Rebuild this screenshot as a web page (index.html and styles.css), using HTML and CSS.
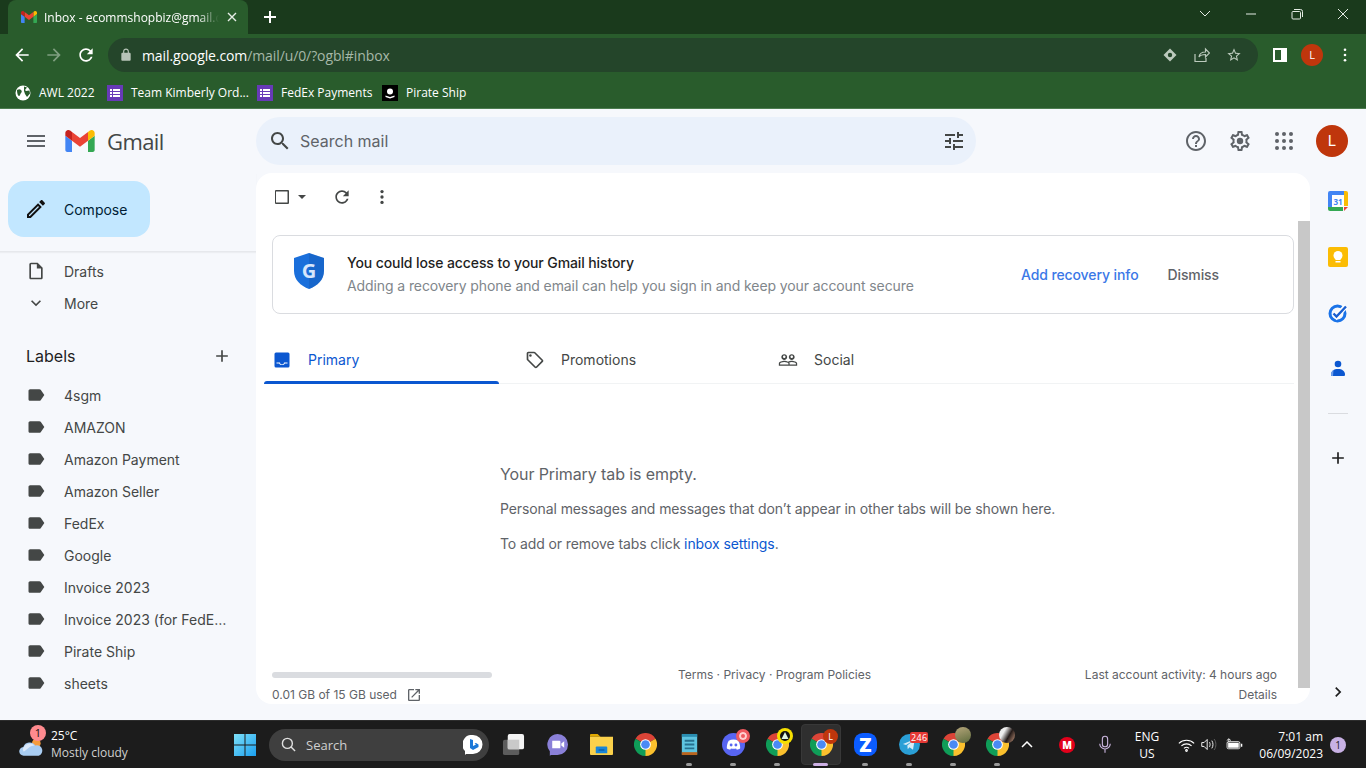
FILE: index.html
```html
<!DOCTYPE html>
<html lang="en">
<head>
<meta charset="utf-8">
<title>Inbox</title>
<link rel="stylesheet" href="styles.css">
</head>
<body>
<svg class="defs" aria-hidden="true">
  <defs>
    <symbol id="gm" viewBox="52 42 88 66">
      <path fill="#4285f4" d="M58 108h14V74L52 59v43c0 3.32 2.69 6 6 6"/>
      <path fill="#34a853" d="M120 108h14c3.32 0 6-2.69 6-6V59l-20 15"/>
      <path fill="#fbbc04" d="M120 48v26l20-15v-8c0-7.42-8.47-11.65-14.4-7.2"/>
      <path fill="#ea4335" d="M72 74V48l24 18 24-18v26L96 92"/>
      <path fill="#c5221f" d="M52 51v8l20 15V48l-5.6-4.2c-5.94-4.45-14.4-.22-14.4 7.2"/>
    </symbol>
    <symbol id="chrome" viewBox="0 0 24 24">
      <path fill="#db4437" d="M12 12 1.6 6A12 12 0 0 1 22.4 6z"/>
      <path fill="#0f9d58" d="M12 12 1.6 6A12 12 0 0 0 12 24l5-6z"/>
      <path fill="#fbc02d" d="M12 12 22.4 6A12 12 0 0 1 12 24z"/>
      <circle cx="12" cy="12" r="5.6" fill="#fff"/>
      <circle cx="12" cy="12" r="4.5" fill="#4a8af4"/>
    </symbol>
    <symbol id="tag" viewBox="0 0 24 24"><path d="M17.63 5.84C17.27 5.33 16.67 5 16 5L5 5.01C3.9 5.01 3 5.9 3 7v10c0 1.1.9 1.99 2 1.99L16 19c.67 0 1.27-.33 1.63-.84L22 12l-4.37-6.16z"/></symbol>
    <symbol id="refresh" viewBox="0 0 24 24"><path d="M17.65 6.35C16.2 4.9 14.21 4 12 4c-4.42 0-7.99 3.58-7.99 8s3.57 8 7.99 8c3.73 0 6.84-2.55 7.73-6h-2.08c-.82 2.33-3.04 4-5.65 4-3.31 0-6-2.69-6-6s2.69-6 6-6c1.66 0 3.14.69 4.22 1.78L13 11h7V4l-2.35 2.35z"/></symbol>
    <symbol id="form" viewBox="0 0 16 16">
      <rect width="16" height="16" fill="#673ab7"/>
      <path fill="#fff" d="M3 4h2v2H3zM6 4h7v2H6zM3 7h2v2H3zM6 7h7v2H6zM3 10h2v2H3zM6 10h7v2H6z"/>
    </symbol>
  </defs>
</svg>

<div class="tabstrip">
  <div class="tab">
    <svg class="tab-fav"><use href="#gm"/></svg>
    <span class="tab-title">Inbox - ecommshopbiz@gmail.com</span>
    <svg class="tab-close" viewBox="0 0 10 10"><path d="M1 1l8 8M9 1l-8 8"/></svg>
  </div>
  <svg class="newtab" viewBox="0 0 12 12"><path d="M6 0v12M0 6h12"/></svg>
  <div class="winctl">
    <svg class="winbtn" viewBox="0 0 46 12"><path d="M18 3l5 5 5-5"/></svg>
    <svg class="winbtn" viewBox="0 0 46 12"><path d="M18 6h10"/></svg>
    <svg class="winbtn" viewBox="0 0 46 12"><path d="M19 3.5h6.5a1 1 0 0 1 1 1V10a1 1 0 0 1-1 1H19a1 1 0 0 1-1-1V4.500a1 1 0 0 1 1-1zM20 1.500h6.500a2 2 0 0 1 2 2V9"/></svg>
    <svg class="winbtn" viewBox="0 0 46 12"><path d="M18 1l10 10M28 1L18 11"/></svg>
  </div>
</div>

<div class="toolbar">
  <svg class="nav" viewBox="0 0 24 24"><path d="M20 11H7.830l5.590-5.590L12 4l-8 8 8 8 1.410-1.410L7.830 13H20v-2z"/></svg>
  <svg class="nav nav-off" viewBox="0 0 24 24"><path d="M12 4l-1.410 1.410L16.170 11H4v2h12.170l-5.580 5.590L12 20l8-8z"/></svg>
  <svg class="nav"><use href="#refresh"/></svg>
  <div class="omnibox">
    <svg class="lock" viewBox="0 0 24 24"><path d="M18 8h-1V6c0-2.760-2.240-5-5-5S7 3.240 7 6v2H6c-1.100 0-2 .9-2 2v10c0 1.100.9 2 2 2h12c1.100 0 2-.9 2-2V10c0-1.100-.9-2-2-2zM9 6c0-1.660 1.340-3 3-3s3 1.340 3 3v2H9V6z"/></svg>
    <span class="url"><span class="url-host">mail.google.com</span>/mail/u/0/?ogbl#inbox</span>
    <svg class="omni-icon" viewBox="0 0 16 16"><path class="omni-fill" d="M8 1.500 14.500 8 8 14.500 1.500 8z"/><circle class="omni-eye" cx="8" cy="8" r="2.200"/></svg>
    <svg class="omni-icon" viewBox="0 0 16 16"><path class="omni-line" d="M1 7v7.500h11V11M5 10c.5-3.500 3-5 6.500-5V2L15.500 6l-4 4V7.500C9 7.500 6.500 8 5 10z"/></svg>
    <svg class="omni-icon" viewBox="0 0 24 24"><path class="omni-fill" d="M22 9.240l-7.190-.62L12 2 9.190 8.630 2 9.240l5.460 4.730L5.820 21 12 17.270 18.180 21l-1.630-7.030L22 9.240zM12 15.400l-3.760 2.270 1-4.280-3.320-2.880 4.380-.38L12 6.100l1.710 4.040 4.380.38-3.320 2.880 1 4.280L12 15.400z"/></svg>
  </div>
  <svg class="sidepanel" viewBox="0 0 14 14"><rect class="sp-a" width="14" height="14"/><rect class="sp-b" x="2" y="2" width="6" height="10"/></svg>
  <div class="tb-avatar">L</div>
  <svg class="tb-menu" viewBox="0 0 4 16"><circle cx="2" cy="2" r="1.500"/><circle cx="2" cy="8" r="1.500"/><circle cx="2" cy="14" r="1.500"/></svg>
</div>

<div class="bookmarks">
  <div class="bm bm-awl">
    <svg class="bm-icon" viewBox="0 0 16 16"><circle cx="8" cy="8" r="7.500" fill="#fff"/><path fill="#295c2c" d="M2 5c2-1 3-1 4 0s1 2 0 3-1 3-2 3-2-3-2-6zM9 1.500l3 1-2 2.500 1 1 3.500-.5.5 3-3 3.500-2-3-1-3z"/></svg>
    <span>AWL 2022</span>
  </div>
  <div class="bm bm-team"><svg class="bm-icon"><use href="#form"/></svg><span>Team Kimberly Ord...</span></div>
  <div class="bm bm-fedex"><svg class="bm-icon"><use href="#form"/></svg><span>FedEx Payments</span></div>
  <div class="bm">
    <svg class="bm-icon" viewBox="0 0 16 16"><rect width="16" height="16" fill="#000"/><circle cx="8" cy="6.500" r="3" fill="#fff"/><path fill="#fff" d="M3.500 10.500l4.500 1.500 4.500-1.500v1.500L8 13.500 3.500 12z"/></svg>
    <span>Pirate Ship</span>
  </div>
</div>

<div class="gmail">
  <header class="gm-header">
    <div class="brand">
      <svg class="icon24 g-icon" viewBox="0 0 24 24"><path d="M3 18h18v-2H3v2zm0-5h18v-2H3v2zm0-7v2h18V6H3z"/></svg>
      <svg class="gm-logo"><use href="#gm"/></svg>
      <span class="gm-word">Gmail</span>
    </div>
    <div class="search">
      <svg class="icon24 s-dark" viewBox="0 0 24 24"><path d="M15.500 14h-.79l-.28-.27C15.410 12.590 16 11.110 16 9.500 16 5.910 13.090 3 9.500 3S3 5.910 3 9.500 5.910 16 9.500 16c1.610 0 3.090-.59 4.230-1.570l.27.28v.79l5 4.990L20.490 19l-4.990-5zm-6 0C7.010 14 5 11.990 5 9.500S7.010 5 9.500 5 14 7.010 14 9.500 11.990 14 9.500 14z"/></svg>
      <span class="search-text">Search mail</span>
      <svg class="icon24 s-dark" viewBox="0 0 24 24"><path d="M3 17v2h6v-2H3zM3 5v2h10V5H3zm10 16v-2h8v-2h-8v-2h-2v6h2zM7 9v2H3v2h4v2h2V9H7zm14 4v-2H11v2h10zm-6-4h2V7h4V5h-4V3h-2v6z"/></svg>
    </div>
    <div class="hdr-actions">
      <svg class="icon24 g-icon" viewBox="0 0 24 24"><path d="M11 18h2v-2h-2v2zm1-16C6.480 2 2 6.480 2 12s4.480 10 10 10 10-4.480 10-10S17.520 2 12 2zm0 18c-4.410 0-8-3.590-8-8s3.590-8 8-8 8 3.590 8 8-3.590 8-8 8zm0-14c-2.210 0-4 1.790-4 4h2c0-1.100.9-2 2-2s2 .9 2 2c0 2-3 1.750-3 5h2c0-2.250 3-2.500 3-5 0-2.210-1.790-4-4-4z"/></svg>
      <svg class="icon24 g-icon" viewBox="0 0 24 24"><path d="M19.430 12.980c.04-.32.07-.64.07-.98 0-.34-.03-.66-.07-.98l2.110-1.650c.19-.15.24-.42.12-.64l-2-3.460c-.09-.16-.26-.25-.44-.25-.06 0-.12.01-.17.03l-2.490 1c-.52-.4-1.080-.73-1.690-.98l-.38-2.650C14.460 2.180 14.250 2 14 2h-4c-.25 0-.46.18-.49.42l-.38 2.650c-.61.25-1.170.59-1.690.98l-2.490-1c-.06-.02-.12-.03-.18-.03-.17 0-.34.09-.43.25l-2 3.460c-.13.22-.07.49.12.64l2.110 1.650c-.04.32-.07.65-.07.98 0 .33.03.66.07.98l-2.110 1.650c-.19.15-.24.42-.12.64l2 3.460c.09.16.26.25.44.25.06 0 .12-.01.17-.03l2.490-1c.52.4 1.080.73 1.690.98l.38 2.650c.03.24.24.42.49.42h4c.25 0 .46-.18.49-.42l.38-2.650c.61-.25 1.170-.59 1.690-.98l2.490 1c.06.02.12.03.18.03.17 0 .34-.09.43-.25l2-3.460c.12-.22.07-.49-.12-.64l-2.110-1.650zm-1.980-1.710c.04.31.05.52.05.73 0 .21-.02.43-.05.73l-.14 1.130.89.7 1.080.84-.7 1.210-1.270-.51-1.040-.42-.9.68c-.43.32-.84.56-1.250.73l-1.060.43-.16 1.130-.2 1.350h-1.400l-.19-1.350-.16-1.130-1.060-.43c-.43-.18-.83-.41-1.230-.71l-.91-.7-1.060.43-1.270.51-.7-1.210 1.080-.84.89-.7-.14-1.130c-.03-.31-.05-.54-.05-.74s.02-.43.05-.73l.14-1.130-.89-.7-1.080-.84.7-1.210 1.270.51 1.040.42.9-.68c.43-.32.84-.56 1.250-.73l1.060-.43.16-1.130.2-1.350h1.390l.19 1.350.16 1.130 1.060.43c.43.18.83.41 1.230.71l.91.7 1.060-.43 1.270-.51.7 1.210-1.070.85-.89.7.14 1.130z"/><circle cx="12" cy="12" r="3.200"/></svg>
      <svg class="icon24 g-icon" viewBox="0 0 24 24"><circle cx="5" cy="5" r="2"/><circle cx="12" cy="5" r="2"/><circle cx="19" cy="5" r="2"/><circle cx="5" cy="12" r="2"/><circle cx="12" cy="12" r="2"/><circle cx="19" cy="12" r="2"/><circle cx="5" cy="19" r="2"/><circle cx="12" cy="19" r="2"/><circle cx="19" cy="19" r="2"/></svg>
      <div class="gm-avatar">L</div>
    </div>
  </header>

  <div class="gm-body">
    <nav class="sidebar">
      <div class="compose-wrap">
        <div class="compose">
          <svg class="icon24 compose-icon" viewBox="0 0 24 24"><path d="M3 17.250V21h3.750L17.810 9.940l-3.750-3.750L3 17.250zM5.920 19H5v-.92l9.060-9.060.92.92L5.920 19zM20.710 7.040c.39-.39.39-1.020 0-1.410l-2.340-2.340c-.2-.2-.45-.29-.71-.29s-.51.1-.7.29l-1.830 1.830 3.750 3.750 1.830-1.830z"/></svg>
          <span>Compose</span>
        </div>
      </div>
      <div class="side-list">
        <div class="side-row">
          <svg class="icon20" viewBox="0 0 24 24"><path d="M14 2H6c-1.100 0-2 .9-2 2v16c0 1.100.9 2 2 2h12c1.100 0 2-.9 2-2V8l-6-6zM6 20V4h7v5h5v11H6z"/></svg>
          <span>Drafts</span>
        </div>
        <div class="side-row">
          <svg class="icon20" viewBox="0 0 24 24"><path d="M16.590 8.590 12 13.170 7.410 8.590 6 10l6 6 6-6z"/></svg>
          <span>More</span>
        </div>
        <div class="labels-head">
          <span>Labels</span>
          <svg class="icon20" viewBox="0 0 24 24"><path d="M19 13h-6v6h-2v-6H5v-2h6V5h2v6h6v2z"/></svg>
        </div>
        <div class="side-row"><svg class="icon20"><use href="#tag"/></svg><span>4sgm</span></div>
        <div class="side-row"><svg class="icon20"><use href="#tag"/></svg><span>AMAZON</span></div>
        <div class="side-row"><svg class="icon20"><use href="#tag"/></svg><span>Amazon Payment</span></div>
        <div class="side-row"><svg class="icon20"><use href="#tag"/></svg><span>Amazon Seller</span></div>
        <div class="side-row"><svg class="icon20"><use href="#tag"/></svg><span>FedEx</span></div>
        <div class="side-row"><svg class="icon20"><use href="#tag"/></svg><span>Google</span></div>
        <div class="side-row"><svg class="icon20"><use href="#tag"/></svg><span>Invoice 2023</span></div>
        <div class="side-row"><svg class="icon20"><use href="#tag"/></svg><span class="ellip">Invoice 2023 (for FedEx Payments)</span></div>
        <div class="side-row"><svg class="icon20"><use href="#tag"/></svg><span>Pirate Ship</span></div>
        <div class="side-row"><svg class="icon20"><use href="#tag"/></svg><span>sheets</span></div>
      </div>
    </nav>

    <main class="card">
      <div class="mail-tools">
        <svg class="icon20 chk" viewBox="0 0 20 20"><path d="M4 3h12a1 1 0 0 1 1 1v12a1 1 0 0 1-1 1H4a1 1 0 0 1-1-1V4a1 1 0 0 1 1-1zm0 1.500v11h11.500v-11z" fill-rule="evenodd"/></svg>
        <svg class="caret" viewBox="0 0 10 5"><path d="M0 0h10L5 5z"/></svg>
        <svg class="icon20 tool-refresh"><use href="#refresh"/></svg>
        <svg class="icon20 tool-more" viewBox="0 0 24 24"><circle cx="12" cy="5.500" r="2"/><circle cx="12" cy="12" r="2"/><circle cx="12" cy="18.500" r="2"/></svg>
      </div>
      <div class="mail-scroll">
        <div class="mail-content">
          <section class="notice">
            <svg class="shield" viewBox="0 0 30 36">
              <path fill="#1a6fdb" d="M15 0 30 5v13c0 8.500-6.500 15-15 18C6.500 33 0 26.500 0 18V5z"/>
              <path fill="#1557b0" d="M15 0 30 5v13c0 8.500-6.500 15-15 18z" opacity=".35"/>
              <text class="shield-g" x="15" y="24.500" text-anchor="middle">G</text>
            </svg>
            <div class="notice-text">
              <div class="notice-title">You could lose access to your Gmail history</div>
              <div class="notice-sub">Adding a recovery phone and email can help you sign in and keep your account secure</div>
            </div>
            <span class="notice-add">Add recovery info</span>
            <span class="notice-dismiss">Dismiss</span>
          </section>
          <div class="tabs">
            <div class="mtab mtab-on">
              <svg class="icon20" viewBox="0 0 20 20"><path d="M4 2.500h12A1.500 1.500 0 0 1 17.500 4v12a1.500 1.500 0 0 1-1.500 1.500H4A1.500 1.500 0 0 1 2.500 16V4A1.500 1.500 0 0 1 4 2.500z"/><path class="inbox-cut" d="M4.500 12.500H8c0 1.200.9 2 2 2s2-.8 2-2h3.500v1H12.800c-.5 1-1.500 1.500-2.800 1.500s-2.300-.5-2.800-1.500H4.500z"/></svg>
              <span>Primary</span>
            </div>
            <div class="mtab">
              <svg class="icon20" viewBox="0 0 24 24"><path d="M21.410 11.580l-9-9C12.050 2.220 11.550 2 11 2H4c-1.100 0-2 .9-2 2v7c0 .55.22 1.050.59 1.420l9 9c.36.36.86.58 1.410.58s1.050-.22 1.410-.59l7-7c.37-.36.59-.86.59-1.410s-.23-1.060-.59-1.420zM13 20.010L4 11V4h7v-.01l9 9-7 7.020z"/><circle cx="6.500" cy="6.500" r="1.500"/></svg>
              <span>Promotions</span>
            </div>
            <div class="mtab">
              <svg class="icon20" viewBox="0 0 24 24"><path d="M16.500 13c-1.200 0-3.070.34-4.500 1-1.430-.67-3.300-1-4.500-1C5.330 13 1 14.080 1 16.250V19h22v-2.750c0-2.170-4.330-3.250-6.500-3.250zm-4 4.500h-10v-1.250c0-.54 2.560-1.750 5-1.750s5 1.210 5 1.750v1.250zm9 0H14v-1.250c0-.46-.2-.86-.52-1.220.88-.3 1.960-.53 3.020-.53 2.440 0 5 1.210 5 1.750v1.250zM7.500 12c1.930 0 3.500-1.570 3.500-3.500S9.430 5 7.500 5 4 6.570 4 8.500 5.570 12 7.500 12zm0-5.500c.83 0 1.500.67 1.500 1.500s-.67 1.500-1.500 1.500S6 8.830 6 8 6.670 6.500 7.500 6.500zm9 5.500c1.930 0 3.500-1.570 3.500-3.500S18.430 5 16.500 5 13 6.570 13 8.500s1.570 3.500 3.500 3.500zm0-5.500c.83 0 1.500.67 1.500 1.500s-.67 1.500-1.500 1.500S15 8.830 15 8s.67-1.500 1.500-1.500z"/></svg>
              <span>Social</span>
            </div>
          </div>
          <div class="empty">
            <div class="empty-title">Your Primary tab is empty.</div>
            <div class="empty-line">Personal messages and messages that don’t appear in other tabs will be shown here.</div>
            <div class="empty-line empty-link">To add or remove tabs click <a class="link">inbox settings</a>.</div>
          </div>
          <footer class="mail-foot">
            <div class="foot-left">
              <div class="quota"></div>
              <div class="quota-text"><span>0.01 GB of 15 GB used</span>
                <svg class="quota-open" viewBox="0 0 24 24"><path d="M19 19H5V5h7V3H5c-1.110 0-2 .9-2 2v14c0 1.100.89 2 2 2h14c1.100 0 2-.9 2-2v-7h-2v7zM14 3v2h3.590l-9.830 9.830 1.410 1.410L19 6.410V10h2V3h-7z"/></svg>
              </div>
            </div>
            <div class="foot-mid">Terms · Privacy · Program Policies</div>
            <div class="foot-right"><div>Last account activity: 4 hours ago</div><div>Details</div></div>
          </footer>
        </div>
        <div class="vscroll"></div>
      </div>
    </main>

    <aside class="rail">
      <div class="rail-item">
        <svg class="rail-icon" viewBox="0 0 20 20">
          <path fill="#4285f4" d="M0 2a2 2 0 0 1 2-2h14v4H4v12H0z"/>
          <path fill="#fbbc04" d="M16 0h2a2 2 0 0 1 2 2v13h-4z"/>
          <path fill="#34a853" d="M0 16h15v4H2a2 2 0 0 1-2-2z"/>
          <path fill="#ea4335" d="M16 16h4l-4 4z"/>
          <rect x="4" y="4" width="12" height="12" fill="#fff"/>
          <text class="cal-num" x="10" y="13.500" text-anchor="middle">31</text>
        </svg>
      </div>
      <div class="rail-item">
        <svg class="rail-icon" viewBox="0 0 20 20">
          <rect width="20" height="20" rx="2" fill="#fbbc04"/>
          <circle cx="10" cy="8.500" r="4.500" fill="#fff"/>
          <rect x="7.500" y="11" width="5" height="2" fill="#fff"/>
          <rect x="7.500" y="14" width="5" height="1.500" fill="#fff"/>
        </svg>
      </div>
      <div class="rail-item">
        <svg class="rail-icon" viewBox="0 0 20 20">
          <circle cx="9.500" cy="10.500" r="7.500" fill="none" stroke="#1a73e8" stroke-width="3"/>
          <path d="M5.500 10.500l3 3L18 3" fill="none" stroke="#fff" stroke-width="5"/>
          <path d="M5.500 10.500l3 3L18 3.500" fill="none" stroke="#1a5fd0" stroke-width="2.400"/>
        </svg>
      </div>
      <div class="rail-item">
        <svg class="rail-icon" viewBox="0 0 20 20">
          <circle cx="10" cy="5" r="3.300" fill="#0b57d0"/>
          <path fill="#0b57d0" d="M3 15.500c0-3.500 3-5.500 7-5.500s7 2 7 5.500c0 1-.5 1.500-1.500 1.500h-11c-1 0-1.500-.5-1.500-1.500z"/>
          <path fill="#6d9eeb" d="M3 15.500c0-2 1-3.500 2.500-4.500L5 17h-.5c-1 0-1.500-.5-1.500-1.500z"/>
        </svg>
      </div>
      <div class="rail-sep"></div>
      <div class="rail-item">
        <svg class="rail-plus" viewBox="0 0 24 24"><path d="M19 13h-6v6h-2v-6H5v-2h6V5h2v6h6v2z"/></svg>
      </div>
      <svg class="rail-chev" viewBox="0 0 24 24"><path d="M10 6 8.590 7.410 13.170 12l-4.580 4.590L10 18l6-6z"/></svg>
    </aside>
  </div>
</div>

<div class="taskbar">
  <div class="weather">
    <svg class="wx-icon" viewBox="0 0 26 20">
      <circle cx="18" cy="6" r="4.500" fill="#f59b3c"/>
      <path fill="#a9cdf2" d="M5 19a4.500 4.500 0 0 1-.5-9A7 7 0 0 1 17 8.500 5 5 0 0 1 20.500 19z"/>
      <path fill="#dbe9fa" d="M5 15a4 4 0 0 1 0-5A7 7 0 0 1 16 8.500c-4 0-6 3-11 6.500z"/>
    </svg>
    <span class="wx-badge">1</span>
    <div class="wx-text"><div class="wx-temp">25°C</div><div class="wx-desc">Mostly cloudy</div></div>
  </div>
  <div class="task">
    <svg class="win-logo" viewBox="0 0 24 24">
      <defs><linearGradient id="wg" x1="0" y1="0" x2="1" y2="1"><stop offset="0" stop-color="#7ee0f8"/><stop offset="1" stop-color="#1a9ff0"/></linearGradient></defs>
      <path fill="url(#wg)" d="M1 1h10.500v10.500H1zM12.500 1H23v10.500H12.500zM1 12.500h10.500V23H1zM12.500 12.500H23V23H12.500z"/>
    </svg>
  </div>
  <div class="tsearch">
    <svg class="ts-icon" viewBox="0 0 16 16"><circle cx="6.800" cy="6.800" r="5.300"/><path d="M10.700 10.700l4.300 4.300"/></svg>
    <span class="ts-text">Search</span>
    <svg class="ts-bing" viewBox="0 0 20 20">
      <path fill="#fff" d="M10 0a9.500 9.500 0 0 1 0 19H3l-1 1v-4A9.500 9.500 0 0 1 10 0z"/>
      <path fill="#1b78d8" d="M7 4l3 1v6l3-1.500-1.500-1L13 8l2.500 1.500V12L10 15l-3-2z"/>
    </svg>
  </div>
  <div class="task">
    <svg class="tk-icon" viewBox="0 0 24 24">
      <rect x="1" y="7" width="17" height="16" rx="2" fill="#5c5c5c"/>
      <rect x="6" y="1" width="17" height="16" rx="2" fill="#f4f4f4"/>
      <path fill="#c9c9c9" d="M6 7h12v10H6z"/>
    </svg>
    <i class="dot-none"></i>
  </div>
  <div class="task">
    <svg class="tk-icon" viewBox="0 0 24 24">
      <path fill="#8a80d8" d="M12 1a11 11 0 0 1 0 22H5l-1 1v-5A11 11 0 0 1 12 1z"/>
      <path fill="#fff" d="M6.500 8h7.500a1 1 0 0 1 1 1v6a1 1 0 0 1-1 1H6.500zM16 11l3-2.500v7L16 13z"/>
    </svg>
  </div>
  <div class="task">
    <svg class="tk-icon" viewBox="0 0 24 24">
      <path fill="#e0a800" d="M0 2a1 1 0 0 1 1-1h7l3 3h-11z"/>
      <path fill="#fbd14b" d="M0 4h24v18a1 1 0 0 1-1 1H1a1 1 0 0 1-1-1z"/>
      <path fill="#1a86d8" d="M7 14h10a1 1 0 0 1 1 1v6H6v-6a1 1 0 0 1 1-1z"/>
      <path fill="#0d5fa8" d="M9 17h6v1.500H9z"/>
    </svg>
  </div>
  <div class="task"><svg class="tk-icon"><use href="#chrome"/></svg></div>
  <div class="task">
    <svg class="tk-icon" viewBox="0 0 24 24">
      <rect x="4" y="1.500" width="16" height="21" fill="#5ec4e0"/>
      <rect x="4" y="1" width="16" height="3" fill="#2a8db0"/>
      <path fill="#27708f" d="M7 7h10v2H7zM7 11h10v2H7zM7 15h10v2H7z"/>
      <rect x="4" y="20" width="16" height="3" fill="#b9651f"/>
    </svg>
    <i class="run"></i>
  </div>
  <div class="task">
    <svg class="tk-icon" viewBox="0 0 24 24">
      <circle cx="12" cy="12" r="12" fill="#5865f2"/>
      <path fill="#fff" d="M7 8c3-1.500 7-1.500 10 0 1.500 2.500 2 5 2 8-1 1-2.500 1.500-3.500 1.500l-.8-1.300c-1.800.4-3.600.4-5.400 0l-.8 1.300C8 17.500 6 17 5 16c0-3 .5-5.500 2-8z"/>
      <circle cx="9.500" cy="12.500" r="1.500" fill="#5865f2"/><circle cx="14.500" cy="12.500" r="1.500" fill="#5865f2"/>
    </svg>
    <i class="badge-red"></i>
    <i class="run"></i>
  </div>
  <div class="task">
    <svg class="tk-icon"><use href="#chrome"/></svg>
    <svg class="bdg-prof" viewBox="0 0 16 16"><circle cx="8" cy="8" r="8" fill="#f6e000"/><circle cx="8" cy="8" r="5" fill="#111"/><path fill="#dff5e0" d="M4.500 11 8 4l3.500 7z"/></svg>
    <i class="run"></i>
  </div>
  <div class="task task-on">
    <svg class="tk-icon"><use href="#chrome"/></svg>
    <span class="bdg-l">L</span>
    <i class="run run-on"></i>
  </div>
  <div class="task">
    <svg class="tk-icon" viewBox="0 0 24 24"><rect width="24" height="24" rx="9" fill="#0b5cff"/><text class="z-text" x="12" y="19.500" text-anchor="middle">Z</text></svg>
    <i class="run"></i>
  </div>
  <div class="task">
    <svg class="tk-icon tk-small" viewBox="0 0 24 24"><circle cx="12" cy="12" r="12" fill="#2a9fd6"/><path fill="#d7ecf7" d="M4.500 11.500 18 6l-2 12-4-3-2 2.500-.5-4.500 6-5-7.500 4.500z"/></svg>
    <span class="bdg-num">246</span>
    <i class="run"></i>
  </div>
  <div class="task">
    <svg class="tk-icon"><use href="#chrome"/></svg>
    <i class="bdg-photo bdg-photo-a"></i>
    <i class="run"></i>
  </div>
  <div class="task">
    <svg class="tk-icon"><use href="#chrome"/></svg>
    <i class="bdg-photo bdg-photo-b"></i>
    <i class="run"></i>
  </div>

  <div class="tray">
    <svg class="tr-chev" viewBox="0 0 12 7"><path d="M1 6l5-5 5 5"/></svg>
    <div class="tr-cell"><span class="mega">M</span></div>
    <svg class="tr-mic" viewBox="0 0 16 24"><rect x="4.500" y="1" width="7" height="14" rx="3.500"/><path d="M1 11a7 7 0 0 0 14 0M8 18v5"/></svg>
    <div class="lang"><div>ENG</div><div>US</div></div>
    <svg class="tr-wifi" viewBox="0 0 20 16"><path d="M1 6a13 13 0 0 1 18 0M4 9a9 9 0 0 1 12 0M7 12a4.500 4.500 0 0 1 6 0"/><circle cx="10" cy="14.500" r="1"/></svg>
    <svg class="tr-vol" viewBox="0 0 22 16"><path d="M1 5.500h3L8 1.500v13l-4-4H1zM11 5c1 2 1 4 0 6M14 3c2 3 2 7 0 10"/><path class="tr-vol-dim" d="M17 1c3 4 3 10 0 14"/></svg>
    <svg class="tr-bat" viewBox="0 0 24 16"><rect x="1.500" y="4" width="18" height="10" rx="2"/><path class="bat-fill" d="M3 5.500h15v7H3zM21 7h2v4h-2z"/><path class="bat-plug" d="M4 0v5M1 2.500l3-2.500 3 2.500"/></svg>
    <div class="clock"><div>7:01 am</div><div>06/09/2023</div></div>
    <span class="notif">1</span>
  </div>
</div>
</body>
</html>
```

FILE: styles.css
```css
* { box-sizing: border-box; }
html, body { margin: 0; padding: 0; }
body {
  width: 1366px;
  height: 768px;
  overflow: hidden;
  display: flex;
  flex-direction: column;
  font-family: "Inter", "Liberation Sans", sans-serif;
  background: #f6f8fc;
}
.defs { width: 0; height: 0; position: absolute; }
svg { display: block; flex: none; }

/* Browser chrome */
.tabstrip {
  height: 34px;
  background: #1a3a1c;
  display: flex;
  align-items: stretch;
  flex: none;
}
.tab {
  width: 240px;
  margin-left: 8px;
  background: #295c2c;
  border-radius: 8px 8px 0 0;
  display: flex;
  align-items: center;
  padding: 0 10px 0 13px;
  color: #fff;
  font: 12px "Open Sans", sans-serif;
}
.tab-fav { width: 16px; height: 12px; margin-right: 7px; }
.tab-title {
  flex: 1;
  overflow: hidden;
  white-space: nowrap;
  -webkit-mask-image: linear-gradient(to right, #000 88%, transparent 100%);
  mask-image: linear-gradient(to right, #000 88%, transparent 100%);
}
.tab-close { width: 10px; height: 10px; margin-left: 8px; margin-right: 1px; stroke: #e8eee8; stroke-width: 1.4; fill: none; }
.newtab { width: 12px; height: 12px; margin: 11px 0 0 16px; stroke: #fff; stroke-width: 2; fill: none; }
.winctl { margin-left: auto; display: flex; align-items: center; margin-top: -6px; margin-right: 0; }
.winbtn { width: 46px; height: 12px; stroke: #e4ebe4; stroke-width: 1; fill: none; }

.toolbar {
  height: 42px;
  flex: none;
  background: #295c2c;
  display: flex;
  align-items: center;
  padding-left: 12px;
}
.nav { width: 20px; height: 20px; margin-right: 12px; fill: #fff; }
.nav-off { fill: #7f9f80; }
.omnibox {
  width: 1150px;
  height: 34px;
  margin-left: 0;
  border-radius: 17px;
  background: #24452a;
  display: flex;
  align-items: center;
  padding-left: 11px;
}
.lock { width: 14px; height: 14px; fill: #b7c4b8; }
.url { margin-left: 9px; flex: 1; font: 14px "Open Sans", sans-serif; color: #a6b8a8; letter-spacing: -.1px; }
.url-host { color: #fff; }
.omni-icon { width: 16px; height: 16px; margin-right: 16px; }
.omni-fill { fill: #bccabd; }
.omni-eye { fill: #24452a; }
.omni-line { fill: none; stroke: #bccabd; stroke-width: 1.200; }
.sidepanel { width: 14px; height: 14px; margin-left: 15px; }
.sp-a { fill: #fff; }
.sp-b { fill: #295c2c; }
.tb-avatar {
  width: 22px; height: 22px; margin-left: 14px;
  border-radius: 50%;
  background: #bf360c;
  color: #fff;
  font: 11px/22px "Open Sans", sans-serif;
  text-align: center;
}
.tb-menu { width: 4px; height: 14px; margin-left: 20px; fill: #fff; }

.bookmarks {
  height: 33px;
  flex: none;
  background: #295c2c;
  border-bottom: 1px solid #4c7c50;
  padding: 6px 0 5px 15px;
  display: flex;
  align-items: center;
  color: #fff;
  font: 12px "Open Sans", sans-serif;
}
.bm { display: flex; align-items: center; gap: 8px; white-space: nowrap; }
.bm-icon { width: 16px; height: 16px; }
.bm-awl { width: 92px; }
.bm-team { width: 150px; }
.bm-fedex { width: 125px; }

/* Gmail */
.gmail { height: 611px; flex: none; display: flex; flex-direction: column; background: #f6f8fc; }
.gm-header { height: 64px; flex: none; display: flex; align-items: center; }
.brand { width: 256px; display: flex; align-items: center; padding-left: 24px; }
.gm-logo { width: 30px; height: 22px; margin-left: 17px; }
.gm-word { margin-left: 12px; font: 22px "Open Sans", sans-serif; color: #444746; letter-spacing: -.6px; }
.icon24 { width: 24px; height: 24px; }
.icon20 { width: 20px; height: 20px; fill: #444746; }
.g-icon { fill: #5f6368; }
.s-dark { fill: #444746; }
.search {
  width: 720px; height: 48px;
  background: #eaf1fb;
  border-radius: 24px;
  display: flex;
  align-items: center;
  padding: 0 10px 0 12px;
}
.search-text { flex: 1; margin-left: 8px; font-size: 16px; color: #5f6368; letter-spacing: 0; }
.hdr-actions { flex: 1; display: flex; align-items: center; padding-left: 208px; gap: 20px; }
.gm-avatar {
  width: 32px; height: 32px; margin-left: 0;
  border-radius: 50%;
  background: #bf360c;
  color: #fff;
  font-size: 15px;
  line-height: 32px;
  text-align: center;
}
.gm-body { flex: 1; min-height: 0; display: flex; }

.sidebar { width: 256px; flex: none; display: flex; flex-direction: column; min-height: 0; }
.compose-wrap { height: 79px; padding: 8px 0 0 8px; border-bottom: 1px solid #e6e8ec; box-shadow: 0 1px 1px #eceef2; flex: none; }
.compose {
  width: 142px; height: 56px;
  border-radius: 16px;
  background: #c2e7ff;
  display: flex;
  align-items: center;
  padding-left: 16px;
  color: #001d35;
  font-size: 14px;
}
.compose span { margin-left: 16px; }
.compose-icon { fill: #111; }
.side-list { padding-top: 3px; flex: 1; overflow: hidden; }
.side-row {
  height: 32px;
  display: flex;
  align-items: center;
  padding-left: 26px;
  font-size: 14px;
  color: #444746;
}
.side-row span { margin-left: 18px; }
.side-row .ellip { width: 163px; overflow: hidden; white-space: nowrap; text-overflow: ellipsis; }
.labels-head {
  height: 60px;
  padding: 14px 24px 0 26px;
  display: flex;
  align-items: center;
  justify-content: space-between;
  font-size: 16px;
  color: #1f1f1f;
}

.card {
  width: 1054px; height: 531px;
  flex: none;
  background: #fff;
  border-radius: 16px;
  overflow: hidden;
  display: flex;
  flex-direction: column;
}
.mail-tools { height: 48px; flex: none; display: flex; align-items: center; padding-left: 16px; }
.chk { fill: #444746; }
.caret { width: 8px; height: 4px; margin-left: 6px; fill: #444746; }
.tool-refresh { margin-left: 26px; }
.tool-more { margin-left: 20px; }
.mail-scroll { flex: 1; min-height: 0; display: flex; }
.mail-content { flex: 1; min-width: 0; display: flex; flex-direction: column; }
.vscroll { width: 12px; flex: none; background: #c8c8c8; margin-bottom: 16px; }

.notice {
  height: 79px;
  margin: 14px 4px 0 16px;
  flex: none;
  border: 1px solid #dadce0;
  border-radius: 8px;
  display: flex;
  align-items: center;
  padding-left: 21px;
  font-size: 14px;
}
.shield { width: 30px; height: 36px; margin-top: -8px; }
.shield-g { font: 700 20px "Open Sans", sans-serif; fill: #d7e6fb; }
.notice-text { flex: 1; margin-left: 23px; margin-top: -1px; }
.notice-title { line-height: 20px; color: #1f1f1f; font-weight: 500; letter-spacing: -.1px; }
.notice-sub { line-height: 20px; margin-top: 3px; color: #80868b; letter-spacing: -.1px; }
.notice-add { color: #3b78e7; font-weight: 500; letter-spacing: -.1px; }
.notice-dismiss { color: #5f6368; font-weight: 500; margin: 0 74px 0 29px; letter-spacing: -.1px; }

.tabs {
  height: 48px;
  margin: 22px 4px 0 8px;
  flex: none;
  display: flex;
  border-bottom: 1px solid #f1f3f4;
  font-size: 14px;
  color: #444746;
}
.mtab { width: 253px; display: flex; align-items: center; padding-left: 8px; gap: 16px; }
.mtab-on {
  width: 235px;
  margin-right: 18px;
  color: #0b57d0;
  position: relative;
}
.mtab-on .icon20 { fill: #0b57d0; }
.mtab-on::after {
  content: "";
  position: absolute;
  left: 0; right: 0; bottom: -1px;
  height: 3px;
  background: #0b57d0;
  border-radius: 3px 3px 0 0;
}
.inbox-cut { fill: #fff; }

.empty { padding: 80px 0 0 244px; flex: none; }
.empty-title { font-size: 16px; line-height: 20px; color: #5f6368; letter-spacing: -.1px; }
.empty-line { margin-top: 15px; font-size: 14px; line-height: 20px; color: #5f6368; letter-spacing: -.1px; }
.link { color: #0b57d0; }

.mail-foot {
  margin-top: auto;
  padding: 0 21px 1px 16px;
  display: grid;
  grid-template-columns: 1fr auto 1fr;
  font-size: 12px;
  line-height: 16px;
  color: #5f6368;
}
.quota { width: 220px; height: 6px; margin: 5px 0 9px; border-radius: 3px; background: #dadce0; }
.quota-text { display: flex; align-items: center; gap: 9px; height: 16px; }
.quota-open { width: 16px; height: 16px; fill: #5f6368; }
.foot-right { text-align: right; }
.foot-right div + div { margin-top: 4px; }

.rail { width: 56px; flex: none; display: flex; flex-direction: column; align-items: center; padding-bottom: 12px; }
.rail-item { height: 56px; width: 56px; flex: none; display: flex; align-items: center; justify-content: center; }
.rail-icon { width: 20px; height: 20px; }
.cal-num { font: 700 8px "Open Sans", sans-serif; fill: #4285f4; }
.rail-sep { width: 20px; height: 1px; background: #dadce0; margin: 16px 0; flex: none; }
.rail-plus { width: 20px; height: 20px; fill: #1f1f1f; }
.rail-chev { width: 20px; height: 20px; margin-top: auto; margin-bottom: 6px; fill: #1f1f1f; }

/* Taskbar */
.taskbar {
  height: 48px;
  flex: none;
  background: #1c1c1c;
  border-top: 1px solid #2d2d2d;
  margin-top: 0;
  display: flex;
  align-items: center;
  font: 12px "Open Sans", sans-serif;
  color: #fff;
}
.weather { width: 223px; height: 100%; flex: none; display: flex; align-items: center; padding-left: 19px; position: relative; }
.wx-icon { width: 25px; height: 20px; margin-top: 5px; }
.wx-badge {
  position: absolute; left: 30px; top: 4px;
  width: 16px; height: 16px; border-radius: 50%;
  background: #ff8b8f; color: #111;
  font-size: 11px; line-height: 16px; text-align: center;
}
.wx-text { margin-left: 7px; line-height: 16px; }
.wx-desc { color: #d0d0d0; margin-top: 1px; }
.task { width: 44px; height: 47px; flex: none; display: flex; align-items: center; justify-content: center; position: relative; }
.task-on::before {
  content: "";
  position: absolute;
  left: 2px; right: 2px; top: 3px; bottom: 3px;
  border-radius: 4px;
  background: #2f2f2f;
  border: 1px solid #383838;
}
.task-on svg { position: relative; }
.win-logo { width: 24px; height: 24px; }
.tk-icon { width: 23px; height: 23px; }
.tk-small { width: 21px; height: 21px; }
.tsearch {
  width: 220px; height: 32px; margin: 0 2px;
  flex: none;
  border-radius: 16px;
  background: #3f3f3f;
  display: flex;
  align-items: center;
  padding: 0 6px 0 12px;
}
.ts-icon { width: 15px; height: 15px; fill: none; stroke: #e0e0e0; stroke-width: 1.500; }
.ts-text { flex: 1; margin-left: 10px; font-size: 13px; color: #cfcfcf; }
.ts-bing { width: 20px; height: 20px; }
.run { position: absolute; left: 19px; bottom: 2px; width: 6px; height: 3px; border-radius: 2px; background: #9a9a9a; }
.run-on { left: 14px; width: 15px; background: #cdb0e4; }
.badge-red { position: absolute; left: 25px; top: 8px; width: 14px; height: 14px; border-radius: 50%; background: #ef5a5f; border: 3px solid #ef5a5f; box-shadow: inset 0 0 0 2px #ffd0d0; }
.bdg-prof { position: absolute; left: 22px; top: 7px; width: 16px; height: 16px; }
.bdg-l {
  position: absolute; left: 24px; top: 8px;
  width: 15px; height: 15px; border-radius: 50%;
  background: #bf360c; color: #fff;
  font-size: 9px; line-height: 15px; text-align: center;
}
.z-text { font: 800 21px "Open Sans", sans-serif; fill: #fff; }
.bdg-num {
  position: absolute; left: 23px; top: 11px;
  padding: 0 1px;
  height: 11px;
  border-radius: 2px;
  background: #e53935; color: #fff;
  font-size: 9px; line-height: 11px; letter-spacing: .3px;
}
.bdg-photo { position: absolute; left: 24px; top: 6px; width: 16px; height: 16px; border-radius: 50%; }
.bdg-photo-a { background: linear-gradient(160deg, #b5a57a, #5d6b3c); }
.bdg-photo-b { background: linear-gradient(120deg, #eee 30%, #231a18 60%, #c99a80); }

.tray { margin-left: auto; display: flex; align-items: center; height: 100%; padding-right: 20px; }
.tr-chev { width: 12px; height: 7px; margin-right: 26px; fill: none; stroke: #fff; stroke-width: 1.500; }
.tr-cell { width: 16px; height: 16px; margin-right: 24px; flex: none; }
.mega {
  display: block; width: 16px; height: 16px; border-radius: 50%;
  background: #e3001b; color: #fff;
  font-size: 10px; font-weight: 800; line-height: 16px; text-align: center;
}
.tr-mic { width: 12px; height: 19px; margin-right: 21px; fill: none; stroke: #c9b4dd; stroke-width: 1.500; }
.lang { width: 30px; text-align: center; line-height: 17px; margin-right: 16px; }
.tr-wifi { width: 17px; height: 14px; margin-right: 6px; fill: none; stroke: #fff; stroke-width: 1.300; }
.tr-vol { width: 17px; height: 13px; margin-right: 8px; fill: none; stroke: #fff; stroke-width: 1.200; }
.tr-vol-dim { stroke: #666; }
.tr-bat { width: 17px; height: 13px; fill: none; stroke: #fff; stroke-width: 1.200; }
.bat-fill { fill: #fff; stroke: none; }
.bat-plug { stroke: #fff; }
.clock { width: 80px; margin-left: 0; text-align: right; line-height: 17px; }
.notif {
  width: 16px; height: 16px; margin-left: 7px;
  border-radius: 50%;
  background: #c8b1e4; color: #222;
  font-size: 10px; line-height: 16px; text-align: center;
}
```
